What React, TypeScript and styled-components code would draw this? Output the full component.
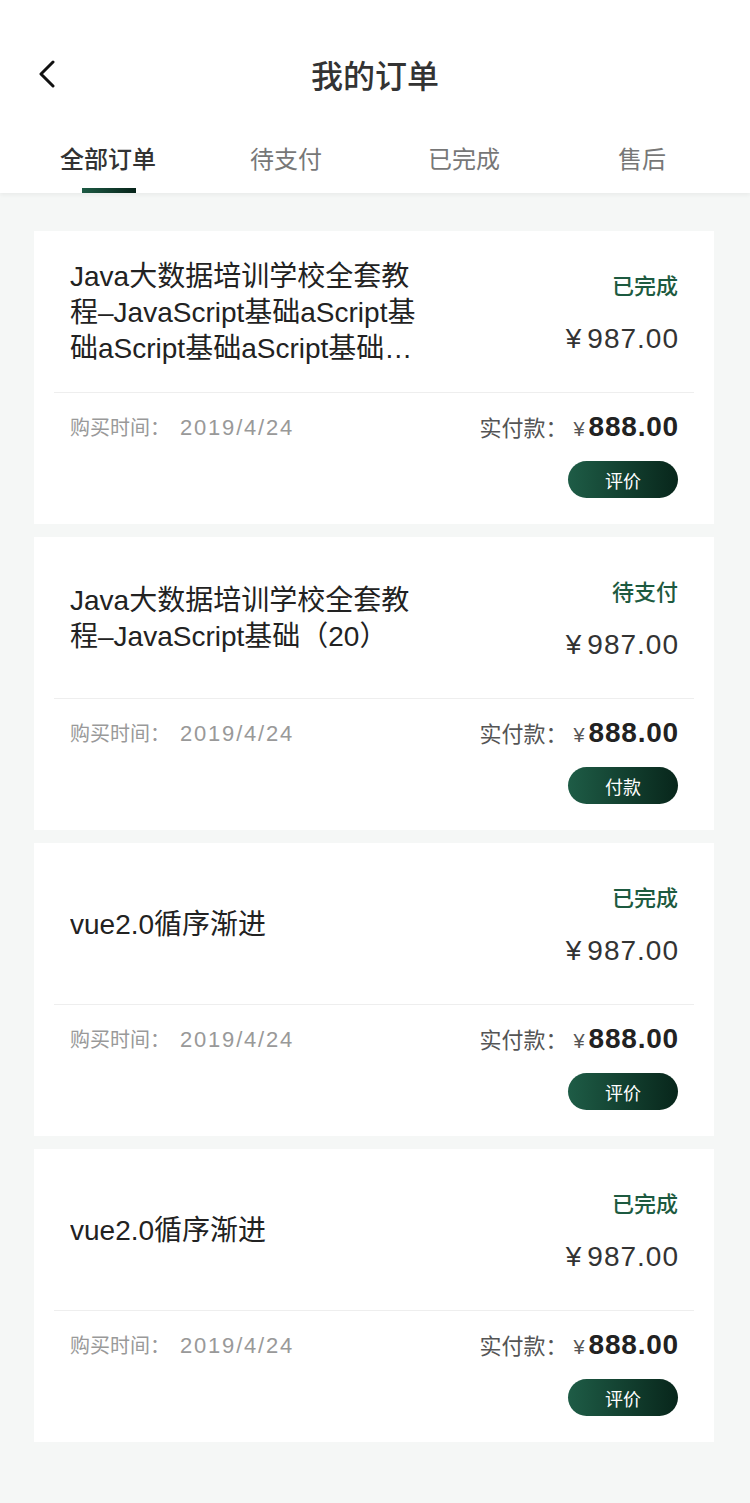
import styled, { createGlobalStyle } from 'styled-components';

type Order = {
  id: number;
  title: string;
  status: string;
  price: string;
  paid: string;
  date: string;
  action: string;
};

const orders: Order[] = [
  {
    id: 1,
    title:
      'Java大数据培训学校全套教程–JavaScript基础aScript基础aScript基础aScript基础aScript基础aScript基础',
    status: '已完成',
    price: '987.00',
    paid: '888.00',
    date: '2019/4/24',
    action: '评价',
  },
  {
    id: 2,
    title: 'Java大数据培训学校全套教程–JavaScript基础（20）',
    status: '待支付',
    price: '987.00',
    paid: '888.00',
    date: '2019/4/24',
    action: '付款',
  },
  {
    id: 3,
    title: 'vue2.0循序渐进',
    status: '已完成',
    price: '987.00',
    paid: '888.00',
    date: '2019/4/24',
    action: '评价',
  },
  {
    id: 4,
    title: 'vue2.0循序渐进',
    status: '已完成',
    price: '987.00',
    paid: '888.00',
    date: '2019/4/24',
    action: '评价',
  },
];

const tabs = ['全部订单', '待支付', '已完成', '售后'];

const App = () => {
  return (
    <Page>
      <GlobalStyle />
      <Header>
        <NavBar>
          <BackButton aria-label="返回">
            <svg width="18" height="28" viewBox="0 0 18 28" fill="none">
              <path
                d="M15 2 L3 14 L15 26"
                stroke="#111"
                strokeWidth="3"
                strokeLinecap="round"
                strokeLinejoin="round"
              />
            </svg>
          </BackButton>
          <Title>我的订单</Title>
          <span />
        </NavBar>
        <Tabs>
          {tabs.map((t, i) => (
            <Tab key={t}>
              <TabLabel $active={i === 0}>{t}</TabLabel>
              <Indicator $active={i === 0} />
            </Tab>
          ))}
        </Tabs>
      </Header>

      <OrderList>
        {orders.map((o) => (
          <Card key={o.id}>
            <CardTop>
              <OrderTitle>{o.title}</OrderTitle>
              <Side>
                <Status>{o.status}</Status>
                <Price>
                  <Yen>¥</Yen>
                  {o.price}
                </Price>
              </Side>
            </CardTop>
            <Divider />
            <CardBottom>
              <InfoRow>
                <BuyDate>
                  购买时间：<DateValue>{o.date}</DateValue>
                </BuyDate>
                <Paid>
                  <PaidLabel>实付款：</PaidLabel>
                  <SmallYen>¥</SmallYen>
                  <Amount>{o.paid}</Amount>
                </Paid>
              </InfoRow>
              <ActionRow>
                <ActionBtn>{o.action}</ActionBtn>
              </ActionRow>
            </CardBottom>
          </Card>
        ))}
      </OrderList>
    </Page>
  );
};

const GlobalStyle = createGlobalStyle`
  * {
    box-sizing: border-box;
  }
  body {
    margin: 0;
    background: #f5f7f6;
    font-family: 'Liberation Sans', 'Noto Sans CJK SC', sans-serif;
  }
`;

const Page = styled.div`
  min-height: 1503px;
  background: #f5f7f6;
`;

const Header = styled.div`
  background: #fff;
  box-shadow: 0 2px 4px rgba(0, 0, 0, 0.05);
`;

const NavBar = styled.div`
  display: grid;
  grid-template-columns: 1fr auto 1fr;
  align-items: center;
  height: 116px;
  padding-top: 34px;
  padding-bottom: 2px;
`;

const BackButton = styled.button`
  justify-self: start;
  display: flex;
  align-items: center;
  background: none;
  border: none;
  padding: 0 0 0 38px;
  cursor: pointer;
`;

const Title = styled.h1`
  margin: 0;
  font-size: 32px;
  line-height: 40px;
  font-weight: 500;
  color: #333;
  font-family: 'Noto Sans CJK SC', sans-serif;
`;

const Tabs = styled.div`
  display: grid;
  grid-template-columns: repeat(4, 1fr);
  padding: 0 19px;
  height: 77px;
`;

const Tab = styled.div`
  display: flex;
  flex-direction: column;
  align-items: center;
  padding-top: 25px;
  cursor: pointer;
`;

const TabLabel = styled.span<{ $active: boolean }>`
  font-family: 'Noto Sans CJK SC', sans-serif;
  font-size: 24px;
  line-height: 34px;
  font-weight: ${(p) => (p.$active ? 500 : 400)};
  color: ${(p) => (p.$active ? '#333' : '#777')};
`;

const Indicator = styled.div<{ $active: boolean }>`
  width: 54px;
  height: 5px;
  margin-top: 13px;
  margin-left: 2px;
  background: ${(p) =>
    p.$active ? 'linear-gradient(90deg, #1d5a44, #07241a)' : 'transparent'};
`;

const OrderList = styled.div`
  display: flex;
  flex-direction: column;
  gap: 13px;
  padding: 38px 36px 60px 34px;
`;

const Card = styled.div`
  background: #fff;
`;

const CardTop = styled.div`
  display: flex;
  height: 161px;
  padding: 0 36px;
`;

const OrderTitle = styled.div`
  align-self: center;
  width: 356px;
  margin-top: 3px;
  font-size: 28px;
  line-height: 36px;
  color: #222;
  display: -webkit-box;
  -webkit-line-clamp: 3;
  -webkit-box-orient: vertical;
  overflow: hidden;
`;

const Side = styled.div`
  margin-left: auto;
  padding-top: 39px;
  text-align: right;
`;

const Status = styled.div`
  font-family: 'Noto Sans CJK SC', sans-serif;
  font-size: 22px;
  line-height: 28px;
  font-weight: 500;
  color: #1d5a40;
`;

const Price = styled.div`
  margin-top: 23px;
  margin-right: -1px;
  font-size: 28px;
  line-height: 36px;
  letter-spacing: 1px;
  color: #333;
`;

const Yen = styled.span`
  margin-right: 6px;
  letter-spacing: 0;
`;

const Divider = styled.div`
  height: 1px;
  margin: 0 20px;
  background: #eee;
`;

const CardBottom = styled.div`
  padding: 18px 36px 26px;
`;

const InfoRow = styled.div`
  display: flex;
  justify-content: space-between;
  align-items: center;
  height: 30px;
`;

const BuyDate = styled.div`
  font-family: 'Noto Sans CJK SC', sans-serif;
  font-size: 20px;
  color: #999;
`;

const DateValue = styled.span`
  margin-left: 10px;
  font-family: 'Liberation Sans', sans-serif;
  font-size: 22px;
  letter-spacing: 1.8px;
`;

const Paid = styled.div`
  display: flex;
  align-items: baseline;
  color: #555;
`;

const PaidLabel = styled.span`
  font-family: 'Noto Sans CJK SC', sans-serif;
  font-size: 22px;
`;

const SmallYen = styled.span`
  margin: 0 4px 0 6px;
  font-size: 20px;
`;

const Amount = styled.span`
  margin-right: -1px;
  font-size: 28px;
  font-weight: bold;
  letter-spacing: 0.8px;
  color: #222;
`;

const ActionRow = styled.div`
  display: flex;
  justify-content: flex-end;
  margin-top: 20px;
`;

const ActionBtn = styled.button`
  width: 110px;
  height: 37px;
  border: none;
  border-radius: 19px;
  background: linear-gradient(90deg, #1e5c46, #08261b);
  color: #fff;
  font-family: 'Noto Sans CJK SC', sans-serif;
  font-size: 18px;
  cursor: pointer;
`;

export default App;
